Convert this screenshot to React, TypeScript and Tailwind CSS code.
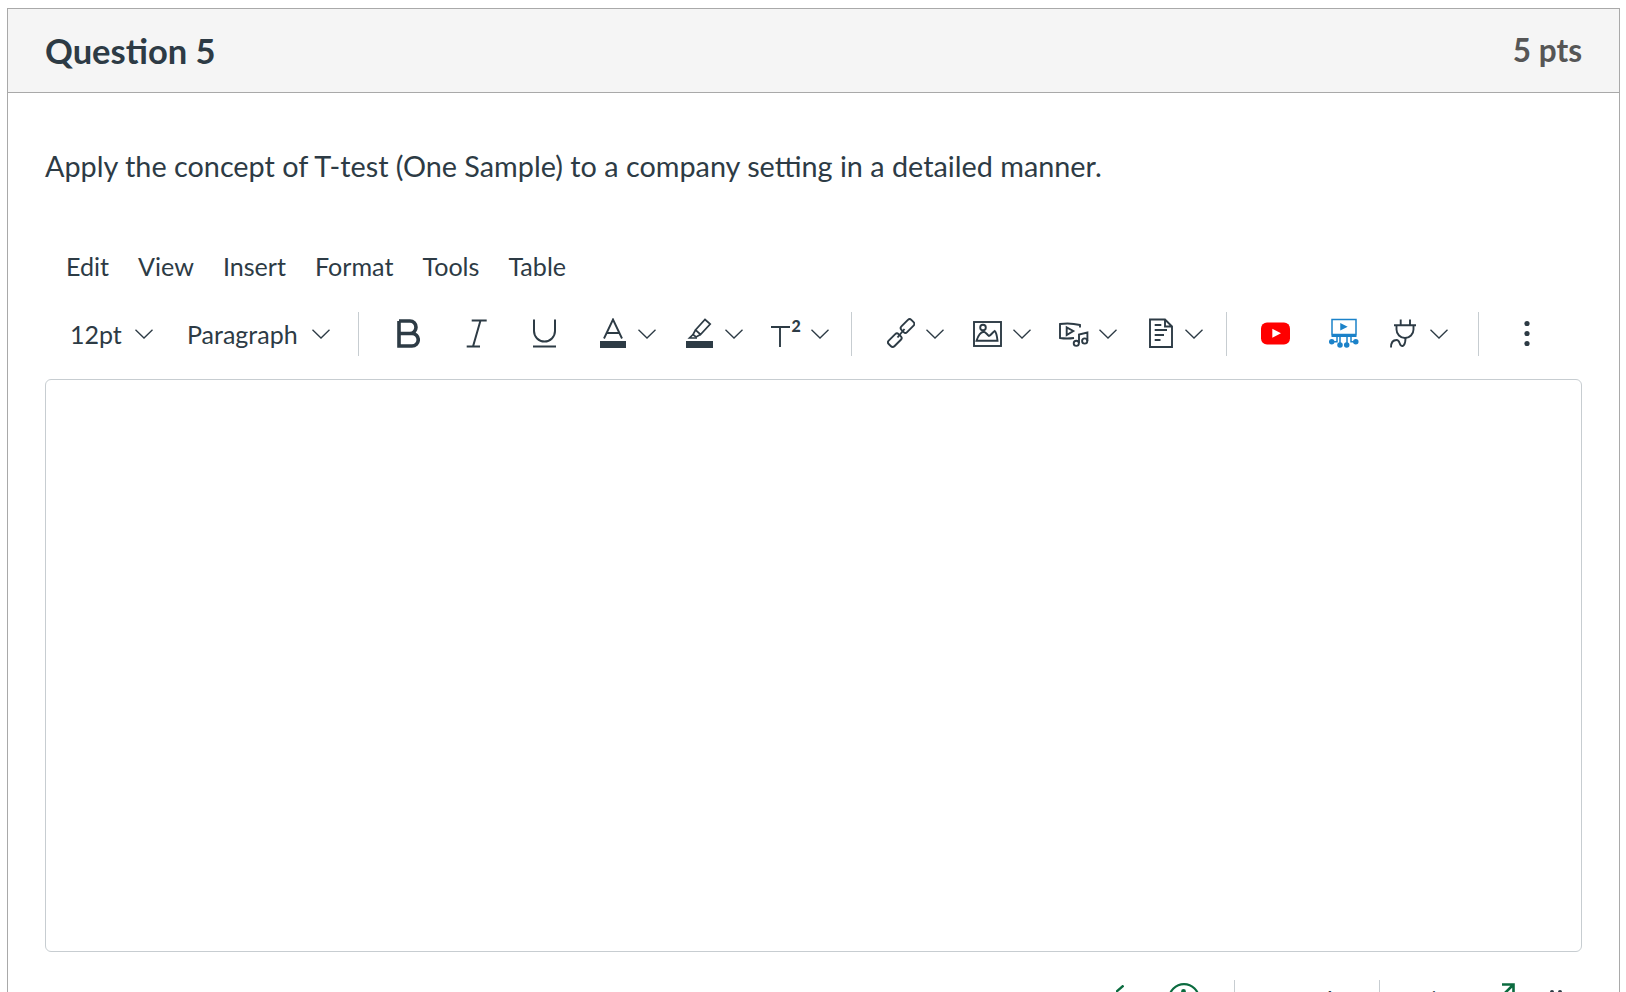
import React from 'react';

const Chevron = ({ className = '' }: { className?: string }) => (
  <svg width="18" height="10" viewBox="0 0 18 10" fill="none" stroke="#2d3b45" strokeWidth="1.3" className={`shrink-0 ${className}`}>
    <path d="M0.5 0.7 9 9 17.5 0.7" />
  </svg>
);

const Sep = ({ className = '' }: { className?: string }) => <div className={`h-[44px] w-px shrink-0 bg-[#c7cdd1] ${className}`} />;

// every toolbar icon sits in a 32px tall box so it lines up with the row centre
const Icon = ({ w, className = '', children }: { w: number; className?: string; children: React.ReactNode }) => (
  <svg width={w} height="32" viewBox={`0 0 ${w} 32`} fill="none" stroke="#2d3b45" strokeWidth="1.9" className={`shrink-0 ${className}`}>
    {children}
  </svg>
);

export default function App() {
  return (
    <div className="h-[992px] w-[1626px] overflow-hidden bg-white pl-[7px] pt-[8px] font-['Lato',sans-serif] text-[#2d3b45]">
      <div className="h-[1100px] w-[1613px] border border-[#a9a9a9]">
        <div className="flex h-[84px] items-center justify-between border-b border-[#a9a9a9] bg-[#f5f5f5] pl-[37px] pr-[37px]">
          <h2 className="text-[34.5px] font-bold">Question 5</h2>
          <span className="text-[31.5px] font-bold text-[#565656]">5 pts</span>
        </div>

        <div className="px-[37px]">
          <p className="mt-[51px] text-[28.8px] leading-[44px]">Apply the concept of T-test (One Sample) to a company setting in a detailed manner.</p>

          <div className="mt-[57px] flex h-[44px] items-center gap-[29px] pl-[21px] text-[25.1px]">
            <span>Edit</span>
            <span>View</span>
            <span>Insert</span>
            <span>Format</span>
            <span>Tools</span>
            <span>Table</span>
          </div>

          <div className="mt-[23px] flex h-[44px] items-center text-[25px]">
            <span className="ml-[25px] w-[65px] shrink-0 pt-[2px]">12pt</span>
            <Chevron />
            <span className="ml-[34px] w-[125px] shrink-0 pt-[2px]">Paragraph</span>
            <Chevron />
            <Sep className="ml-[28px]" />

            <Icon w={24} className="ml-[37px]">
              <path strokeWidth="3.6" d="M3 3H14a6 6.25 0 0 1 0 12.5H3M14 15.5h2a6.25 6.25 0 0 1 0 12.5H3V3" />
            </Icon>
            <Icon w={22} className="ml-[46px]">
              <path strokeWidth="2" d="M5.7 2.5H20.7M.7 28.5H14M14.5 2.5 7 28.5" />
            </Icon>
            <Icon w={25} className="ml-[44px]">
              <path strokeWidth="2" d="M2 1.5V13a10.5 10.5 0 0 0 21 0V1.5M1 28.5H24" />
            </Icon>

            <Icon w={26} className="ml-[43px]">
              <path d="M4 20.5 13 1.5 22 20.5M7 15H19" />
              <rect x="0" y="23" width="26" height="7" fill="#2d3b45" stroke="none" />
            </Icon>
            <Chevron className="ml-[12px]" />
            <Icon w={27} className="ml-[30px]">
              <path strokeWidth="1.7" d="M19 1.5 24.2 6 14.5 16.5 9.5 12ZM9.5 12 7 16.5 10 19 14.5 16.5" />
              <path d="M7 16.5 3.5 20H11" strokeWidth="1.7" />
              <rect x="0" y="23" width="27" height="7" fill="#2d3b45" stroke="none" />
            </Icon>
            <Chevron className="ml-[12px]" />
            <div className="relative ml-[27px] h-[32px] w-[32px] shrink-0">
              <Icon w={20} className="block">
                <path d="M1 9H20M10 9V29" />
              </Icon>
              <span className="absolute left-[21.5px] top-0 text-[16px] font-black leading-[16px]">2</span>
            </div>
            <Chevron className="ml-[9px]" />
            <Sep className="ml-[22px]" />

            <Icon w={28} className="ml-[35px]">
              <rect x="13.5" y="4" width="14" height="8" rx="2.4" transform="rotate(-45 20.5 8)" />
              <rect x="0.8" y="18.2" width="14" height="8" rx="2.4" transform="rotate(-45 7.8 22.2)" />
              <path d="M10.5 19.5 17.5 11" />
            </Icon>
            <Chevron className="ml-[11px]" />
            <Icon w={29} className="ml-[29px]">
              <rect x="1" y="4" width="27" height="24" />
              <circle cx="10" cy="9.5" r="2.8" />
              <path d="M3.5 22.7H24.5C24 18 23 14 21.7 13 20 14 18 17 16 18 14 16.5 12.5 13.7 10.7 13.7 8 14 5 18 3.5 22.7Z" />
            </Icon>
            <Chevron className="ml-[11px]" />
            <Icon w={30} className="ml-[28px]">
              <path d="M21 9.5V7Q11 4.5 1 6V20Q8 21 15 20" />
              <path d="M7.7 9.3V17L14.3 13Z" />
              <circle cx="17.3" cy="25.3" r="2.6" />
              <circle cx="25.7" cy="23" r="2.6" />
              <path d="M20 25V16.5L28.4 14.5V23" />
            </Icon>
            <Chevron className="ml-[10px]" />
            <Icon w={24} className="ml-[32px]">
              <path d="M1 1.5H16L23 8.5V29H1ZM16 1.5V8.5H23" />
              <path d="M5.7 7H12.3M5.7 12H18M5.7 17H15M5.7 22H11.5" />
            </Icon>
            <Chevron className="ml-[12px]" />
            <Sep className="ml-[23px]" />

            <svg width="29" height="32" viewBox="0 0 29 32" className="ml-[34px] shrink-0 blur-[0.5px]">
              <rect x="0" y="4.5" width="29" height="22" rx="6" fill="#ff0000" />
              <path d="M11.3 10.8V19.8L20 15.3Z" fill="#fff" />
            </svg>
            <svg width="30" height="32" viewBox="0 0 30 32" fill="none" stroke="#1b82c9" strokeWidth="1.5" className="ml-[39px] shrink-0">
              <rect x="3" y="1.5" width="24" height="15" />
              <path d="M2.5 18H27.5" strokeWidth="2" />
              <path d="M12 6.3V11.3L17 8.8Z" fill="#1b82c9" />
              <path d="M4.5 23.7H8V18M11 25V18M18 25V18M25 23.7H22V18" />
              <circle cx="2.7" cy="23.7" r="2" fill="#1b82c9" />
              <circle cx="11" cy="27" r="2" fill="#1b82c9" />
              <circle cx="17.7" cy="27" r="2" fill="#1b82c9" />
              <circle cx="26.8" cy="23.7" r="2" fill="#1b82c9" />
            </svg>
            <Icon w={27} className="ml-[31px]">
              <path d="M10.7 1.5V7.3M20 1.5V7.3M4 7.3H26M6.5 7.3V11.5A8.5 8.5 0 0 0 15 20 8.5 8.5 0 0 0 23.5 11.5V7.3" />
              <path d="M15.5 20C15.5 27 13 29 11 27.5 9 26 10 22 6.5 22 3 22 1 25 1 29.5" />
            </Icon>
            <Chevron className="ml-[13px]" />
            <Sep className="ml-[30px]" />

            <svg width="6" height="32" viewBox="0 0 6 32" fill="#2d3b45" className="ml-[45px] shrink-0">
              <circle cx="3" cy="5.5" r="2.6" />
              <circle cx="3" cy="15.5" r="2.6" />
              <circle cx="3" cy="25.5" r="2.6" />
            </svg>
          </div>

          <div className="mt-[23px] h-[573px] rounded-[6px] border border-[#c7cdd1] bg-white" />

          {/* status bar, only its top few pixels are on screen */}
          <div className="mt-[28px] flex h-[44px] items-start text-[25px] leading-[44px]">
            <svg width="8" height="7" viewBox="0 0 8 7" fill="none" stroke="#0b6b3f" strokeWidth="2.4" className="ml-[1071px] mt-[5px] shrink-0">
              <path d="M0 7 7.5 .5" />
            </svg>
            <svg width="32" height="32" viewBox="0 0 32 32" fill="none" stroke="#0b6b3f" strokeWidth="2.2" className="ml-[44px] mt-[3px] shrink-0">
              <circle cx="16" cy="16" r="14.9" />
              <circle cx="15.5" cy="8.5" r="2.4" fill="#0b6b3f" stroke="none" />
            </svg>
            <Sep className="ml-[34px]" />
            <span className="ml-[21px] mt-[-2px] w-[123px] shrink-0">0 words</span>
            <Sep />
            <span className="ml-[30px] mt-[-2px] w-[91px] shrink-0">&lt;/&gt;</span>
            <svg width="14" height="14" viewBox="0 0 14 14" fill="none" stroke="#0b6b3f" strokeWidth="2.6" className="mt-[3px] shrink-0">
              <path d="M1 13 12.5 1.5M1 1.5H12.5V13" />
            </svg>
            <div className="ml-[35px] mt-[10px] flex gap-[4px]">
              <span className="h-[4px] w-[4px] rounded-full bg-[#2d3b45]" />
              <span className="h-[4px] w-[4px] rounded-full bg-[#2d3b45]" />
            </div>
          </div>
        </div>
      </div>
    </div>
  );
}
